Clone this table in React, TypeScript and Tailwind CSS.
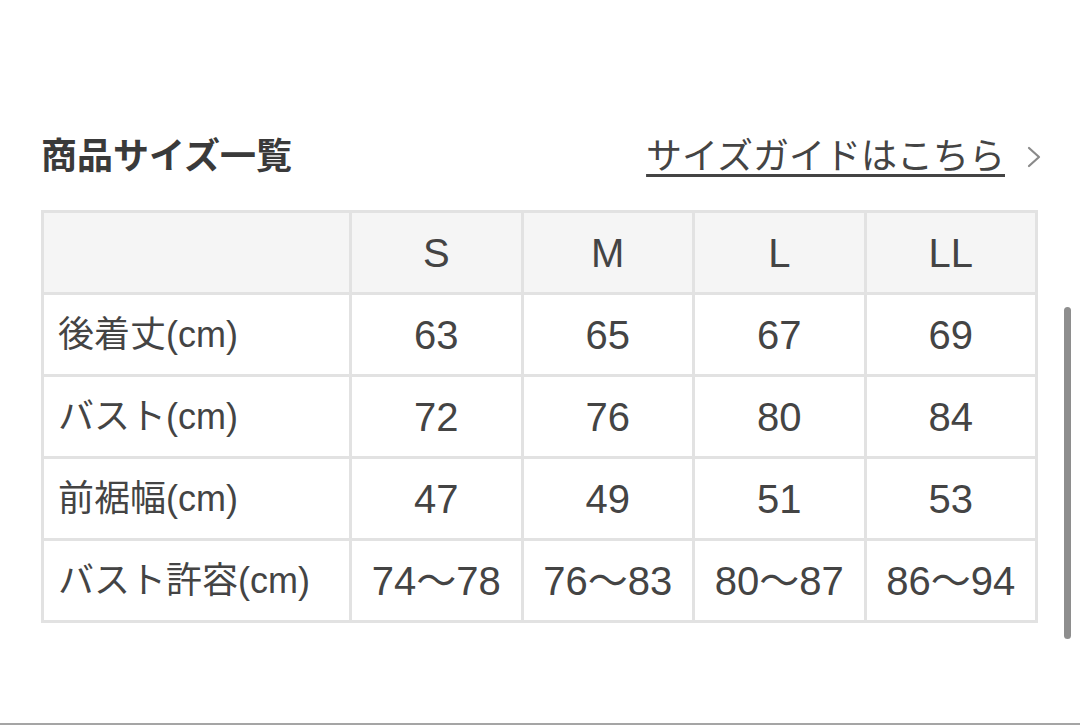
import React from 'react'

const sizes = ['S', 'M', 'L', 'LL']

const rows: { label: string; values: string[] }[] = [
  { label: '後着丈(cm)', values: ['63', '65', '67', '69'] },
  { label: 'バスト(cm)', values: ['72', '76', '80', '84'] },
  { label: '前裾幅(cm)', values: ['47', '49', '51', '53'] },
  { label: 'バスト許容(cm)', values: ['74〜78', '76〜83', '80〜87', '86〜94'] },
]

const font = { fontFamily: '"Liberation Sans", "Noto Sans CJK JP", sans-serif' }

export default function App() {
  return (
    <div className="relative h-[725px] w-[1080px] bg-white flex flex-col text-[#3c3c3c]" style={font}>
      <div className="flex-1 pl-[41px] pr-[42px] pt-[133px]">
        {/* Header */}
        <div className="flex items-center justify-between h-[48px]">
          <h2 className="text-[36px] font-bold leading-none text-[#3a3a3a]">商品サイズ一覧</h2>
          <a className="flex items-center gap-[22px] text-[36px] leading-none text-[#444]">
            <span className="underline decoration-[3px] underline-offset-[5px]">サイズガイドはこちら</span>
            <svg width="14" height="22" viewBox="0 0 14 22" fill="none" className="mr-[-3px]">
              <path d="M2 2 L12 11 L2 20" stroke="#8a8a8a" strokeWidth="2.2" strokeLinecap="round" strokeLinejoin="round" />
            </svg>
          </a>
        </div>

        {/* Size table */}
        <div className="mt-[29px] grid grid-cols-[305px_repeat(4,1fr)] auto-rows-[79px] gap-[3px] p-[3px] bg-[#e2e2e2] text-[40px] leading-none text-[#444]">
          <div className="bg-[#f5f5f5]" />
          {sizes.map(s => (
            <div key={s} className="bg-[#f5f5f5] flex items-center justify-center">{s}</div>
          ))}
          {rows.map(row => (
            <React.Fragment key={row.label}>
              <div className="bg-white flex items-center pl-[14px] text-[36px]">{row.label}</div>
              {row.values.map((v, i) => (
                <div key={i} className="bg-white flex items-center justify-center">{v}</div>
              ))}
            </React.Fragment>
          ))}
        </div>
      </div>

      <div className="h-[2px] bg-[#a5a5a5]" />

      {/* overlay scrollbar */}
      <div className="absolute left-[1064px] top-[307px] w-[7px] h-[332px] rounded-full bg-[#8e8e8e]" />
    </div>
  )
}
